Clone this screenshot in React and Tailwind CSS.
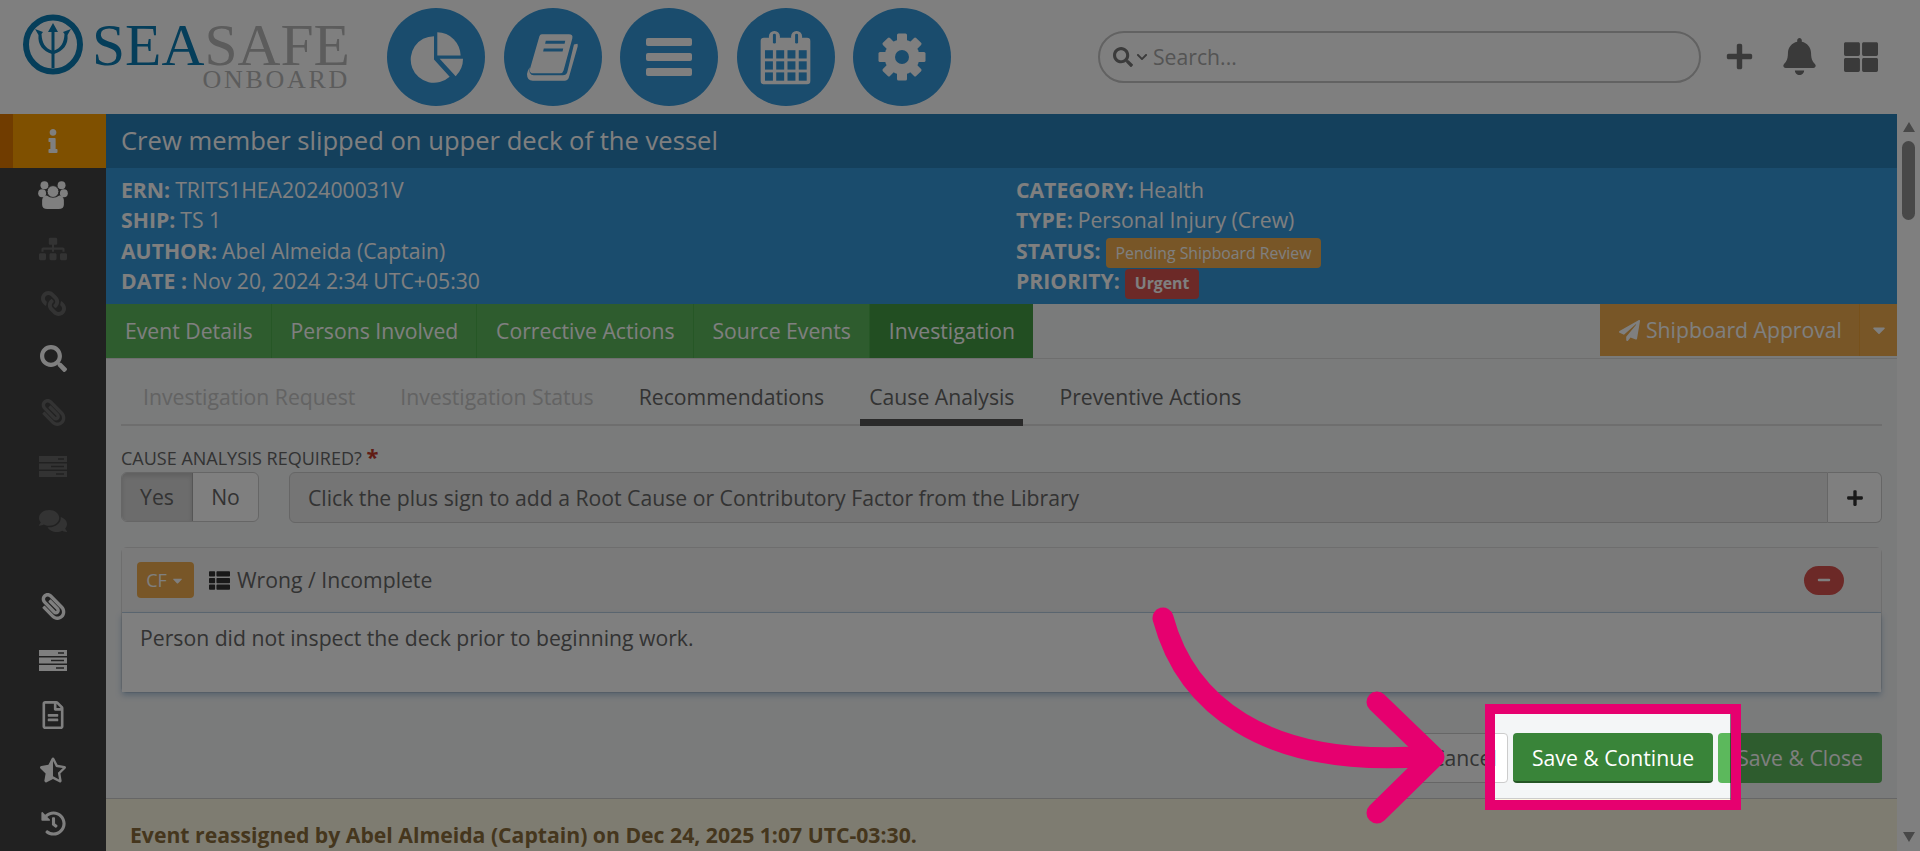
import { FaInfo, FaSitemap, FaLink, FaSearch, FaPaperclip, FaComments, FaRegFileAlt, FaStarHalfAlt, FaHistory, FaPlus, FaBell, FaThLarge, FaPaperPlane, FaCaretDown, FaThList, FaMinus, FaChevronDown } from "react-icons/fa";

const font = "font-['Open_Sans',sans-serif]";

function UsersIcon({ className }) {
  return (
    <svg viewBox="0 0 90 85" className={className}>
      <circle cx="19" cy="13" r="12" fill="currentColor" />
      <circle cx="71" cy="13" r="12" fill="currentColor" />
      <circle cx="12" cy="37" r="12" fill="currentColor" />
      <circle cx="78" cy="37" r="12" fill="currentColor" />
      <circle cx="45" cy="32" r="18" fill="currentColor" stroke="#424242" strokeWidth="3" />
      <path d="M12 58 Q14 44 26 44 Q45 58 64 44 Q76 44 78 58 V72 Q78 85 62 85 H28 Q12 85 12 72 Z" fill="currentColor" />
    </svg>
  );
}

function ServerIcon({ className }) {
  return (
    <svg viewBox="0 0 28 21" className={className}>
      <path fillRule="evenodd" fill="currentColor" d="M0 0H28V6H0Z M19 2.2H25V3.8H19Z M0 7.5H28V13.5H0Z M12 9.7H25V11.3H12Z M0 15H28V21H0Z M17 17.2H25V18.8H17Z" />
    </svg>
  );
}

const sideTop = [
  { icon: UsersIcon, on: true, size: "w-[30px] h-[28px]" },
  { icon: FaSitemap, size: "text-[28px]" },
  { icon: FaLink, size: "text-[25px] -scale-x-100" },
  { icon: FaSearch, on: true, size: "text-[27px]" },
  { icon: FaPaperclip, size: "text-[27px] -scale-x-100" },
  { icon: ServerIcon, size: "w-[28px] h-[21px]" },
  { icon: FaComments, size: "text-[28px]" },
];
const sideBottom = [
  { icon: FaPaperclip, size: "text-[27px] -scale-x-100" },
  { icon: ServerIcon, size: "w-[28px] h-[21px]" },
  { icon: FaRegFileAlt, size: "text-[28px]" },
  { icon: FaStarHalfAlt, size: "text-[26px]" },
  { icon: FaHistory, size: "text-[25px]" },
];

function PieIcon() {
  return (
    <svg viewBox="70 75 165 158" className="w-[55px] h-[53px]" fill="#fff">
      <path d="M145 90 V160 L192 212 A70 70 0 1 1 145 90 Z" />
      <path d="M155 78 A72 72 0 0 1 225 148 H155 Z" />
      <path d="M162 158 H232 A72 72 0 0 1 210 210 Z" />
    </svg>
  );
}

function BookIcon() {
  return (
    <svg viewBox="425 88 158 146" className="w-[53px] h-[49px]">
      <path d="M472 92 H553 Q566 92 563 104 L537 200 Q535 208 527 208 H447 Q436 208 436 198 L465 98 Q467 92 472 92 Z" fill="#fff" />
      <path d="M568 122 L578 120 Q580 122 579 128 L553 220 Q550 230 540 230 H445 Q428 230 428 210 Q430 200 436 190 Q432 214 448 214 H535 Q545 214 548 205 Z" fill="#fff" />
      <path d="M484 111 H542 L540 120 H482 Z M478 134 H536 L534 143 H476 Z" fill="#3498db" />
    </svg>
  );
}

function BarsIcon() {
  return (
    <div className="flex flex-col gap-[7px]">
      <div className="w-[46px] h-[8px] rounded-[2px] bg-white" />
      <div className="w-[46px] h-[8px] rounded-[2px] bg-white" />
      <div className="w-[46px] h-[8px] rounded-[2px] bg-white" />
    </div>
  );
}

function CalendarIcon() {
  const cells = [];
  for (let r = 0; r < 3; r++) {
    for (let c = 0; c < 4; c++) {
      cells.push(<rect key={r + "-" + c} x={103 + c * 34} y={138 + r * 33.5} width={24} height={25} fill="#3498db" />);
    }
  }
  return (
    <svg viewBox="88 78 154 164" className="w-[51px] h-[55px]">
      <rect x="90" y="100" width="150" height="141" rx="10" fill="#fff" />
      <rect x="115" y="80" width="33" height="45" rx="16" fill="#fff" />
      <rect x="182" y="80" width="33" height="45" rx="16" fill="#fff" />
      <rect x="127" y="88" width="9" height="30" rx="4" fill="#3498db" />
      <rect x="194" y="88" width="9" height="30" rx="4" fill="#3498db" />
      {cells}
    </svg>
  );
}

function GearIcon() {
  const teeth = [0, 45, 90, 135, 180, 225, 270, 315];
  return (
    <svg viewBox="0 0 48 48" className="w-[48px] h-[48px]" fill="#fff">
      <circle cx="24" cy="24" r="17.5" />
      {teeth.map((a) => (
        <rect key={a} x="19" y="0.5" width="10" height="9" rx="1.5" transform={"rotate(" + a + " 24 24)"} />
      ))}
      <circle cx="24" cy="24" r="7" fill="#3498db" />
    </svg>
  );
}

function NavCircle({ children }) {
  return (
    <div className="w-[98px] h-[98px] shrink-0 rounded-full bg-[#3498db] flex items-center justify-center">
      {children}
    </div>
  );
}

function Logo() {
  return (
    <div className="w-[387px] shrink-0 flex pl-[23px] pt-[14px] items-start">
      <svg viewBox="0 0 60 61" className="w-[60px] h-[61px] shrink-0">
        <circle cx="30" cy="30.5" r="27" fill="none" stroke="#0b7cb5" strokeWidth="6" />
        <path d="M30 9 L35 18 H31.5 V54 H28.5 V18 H25 Z" fill="#0b7cb5" />
        <path d="M12 15 L20 18 L18.5 20 C19 29 22 34 29 36.5 V40 C20 37 14.5 31 15.5 21 Z" fill="#0b7cb5" />
        <path d="M48 15 L40 18 L41.5 20 C41 29 38 34 31 36.5 V40 C40 37 45.5 31 44.5 21 Z" fill="#0b7cb5" />
      </svg>
      <div className="ml-[9px] w-[256px] font-['Liberation_Serif',serif]">
        <div className="text-[59.5px] leading-[50px] mt-[6px] whitespace-nowrap text-[#b8b8b8]">
          <span className="text-[#0b7cb5]">SEA</span>SAFE
        </div>
        <div className="text-[26px] leading-[26px] mt-[-3px] tracking-[2.7px] text-right mr-[-2px] text-[#b8b8b8]">ONBOARD</div>
      </div>
    </div>
  );
}

function Header() {
  return (
    <div className="h-[114px] bg-white flex items-start">
      <Logo />
      <div className="flex gap-[18.5px] pt-[8px]">
        <NavCircle><PieIcon /></NavCircle>
        <NavCircle><BookIcon /></NavCircle>
        <NavCircle><BarsIcon /></NavCircle>
        <NavCircle><CalendarIcon /></NavCircle>
        <NavCircle><GearIcon /></NavCircle>
      </div>
      <div className="ml-[147px] mt-[31px] w-[603px] h-[52px] rounded-full border-2 border-[#c4c4c4] flex items-center pl-[13px] text-[21.2px] text-[#a8a8a8]">
        <FaSearch className="text-[#777] text-[20px]" />
        <FaChevronDown className="text-[#777] text-[12px] ml-[3px]" />
        <span className="ml-[5px]">Search...</span>
      </div>
      <div className="flex items-center mt-[38px] h-[37px] ml-[24px] text-[#757575]">
        <FaPlus className="text-[29px]" />
        <FaBell className="text-[37px] ml-[27px]" />
        <FaThLarge className="text-[34px] ml-[26px]" />
      </div>
    </div>
  );
}

function Sidebar() {
  return (
    <div className="w-[106px] shrink-0 bg-[#424242] flex flex-col">
      <div className="h-[54px] bg-[#ffa000] border-l-[13px] border-[#e07800] flex items-center justify-center pr-[13px]">
        <FaInfo className="text-white text-[24px]" />
      </div>
      {sideTop.map((s, i) => {
        const Icon = s.icon;
        return (
          <div key={i} className="h-[54.5px] flex items-center justify-center">
            <Icon className={s.size + " " + (s.on ? "text-white" : "text-[#666]")} />
          </div>
        );
      })}
      <div className="h-[31px]" />
      {sideBottom.map((s, i) => {
        const Icon = s.icon;
        return (
          <div key={i} className="h-[54.5px] flex items-center justify-center">
            <Icon className={s.size + " text-white"} />
          </div>
        );
      })}
    </div>
  );
}

function InfoLine({ label, children }) {
  return (
    <div className="h-[30.2px] flex items-center whitespace-nowrap">
      <b className="font-bold mr-[5px]">{label}</b>
      {children}
    </div>
  );
}

function MainTabs() {
  const tabs = ["Event Details", "Persons Involved", "Corrective Actions", "Source Events"];
  return (
    <div className="flex h-[55px] border-b border-[#ddd]">
      {tabs.map((t) => (
        <div key={t} className="h-[54px] pl-[19px] pr-[17.8px] bg-[#5cb85c] border-r border-[#4cae4c] text-white flex items-center">{t}</div>
      ))}
      <div className="h-[54px] pl-[19px] pr-[17.8px] bg-[#449d44] text-white flex items-center">Investigation</div>
      <div className="ml-auto h-[52px] w-[297px] bg-[#f0ad4e] text-white flex items-center">
        <FaPaperPlane className="ml-[19px] text-[21px]" />
        <span className="ml-[6px]">Shipboard Approval</span>
        <div className="ml-auto w-[38px] h-full border-l border-[#eea236] flex items-center justify-center">
          <FaCaretDown className="text-[20px]" />
        </div>
      </div>
    </div>
  );
}

function SubTabs() {
  const item = "px-[9px] flex items-center pt-[16px] border-b-[7px] mb-[-2px] ";
  return (
    <div className="flex h-[67px] border-b-2 border-[#ddd] pl-[13px] gap-[27px] items-stretch">
      <div className={item + "border-transparent text-[#c6c6c6]"}>Investigation Request</div>
      <div className={item + "border-transparent text-[#c6c6c6]"}>Investigation Status</div>
      <div className={item + "border-transparent"}>Recommendations</div>
      <div className={item + "border-[#555]"}>Cause Analysis</div>
      <div className={item + "border-transparent"}>Preventive Actions</div>
    </div>
  );
}

function CausePanel() {
  return (
    <div className="mt-[24px] rounded-[6px] border border-[#ddd]">
      <div className="h-[65px] bg-[#f5f5f5] flex items-center pl-[15px] pr-[37px] border-b border-[#bcd0e2]">
        <div className="w-[57px] h-[36px] rounded-[4px] bg-[#f0ad4e] text-white text-[18px] flex items-center justify-center gap-[3px]">
          CF<FaCaretDown className="text-[15px]" />
        </div>
        <FaThList className="ml-[15px] text-[#333] text-[21px]" />
        <span className="ml-[7px]">Wrong / Incomplete</span>
        <div className="ml-auto w-[40px] h-[29px] rounded-full bg-[#d9534f] text-white flex items-center justify-center">
          <FaMinus className="text-[14px]" />
        </div>
      </div>
      <div className="h-[79px] bg-white px-[18px] pt-[11px] leading-[27px] shadow-[0_3px_6px_rgba(80,130,180,0.45)]">
        Person did not inspect the deck prior to beginning work.
      </div>
    </div>
  );
}

function Content() {
  return (
    <div className="w-[1791px] shrink-0 bg-[#f4f6f7] text-[21.2px] text-[#666] flex flex-col">
      <div className="h-[54px] bg-[#2980b9] text-white text-[25.6px] flex items-center pl-[15px]">
        Crew member slipped on upper deck of the vessel
      </div>
      <div className="h-[136px] bg-[#3498db] text-white pl-[15px] pt-[7px] flex">
        <div className="w-[895px]">
          <InfoLine label="ERN:">TRITS1HEA202400031V</InfoLine>
          <InfoLine label="SHIP:">TS 1</InfoLine>
          <InfoLine label="AUTHOR:">Abel Almeida (Captain)</InfoLine>
          <InfoLine label="DATE :">Nov 20, 2024 2:34 UTC+05:30</InfoLine>
        </div>
        <div>
          <InfoLine label="CATEGORY:">Health</InfoLine>
          <InfoLine label="TYPE:">Personal Injury (Crew)</InfoLine>
          <InfoLine label="STATUS:">
            <span className="h-[30px] px-[10px] mt-[6px] rounded-[4px] bg-[#f0ad4e] text-[15.8px] flex items-center">Pending Shipboard Review</span>
          </InfoLine>
          <InfoLine label="PRIORITY:">
            <span className="h-[30px] px-[10px] mt-[6px] rounded-[4px] bg-[#d9534f] text-[15.8px] font-bold flex items-center">Urgent</span>
          </InfoLine>
        </div>
      </div>
      <MainTabs />
      <div className="px-[15px]">
        <SubTabs />
        <div className="text-[18px] leading-[24px] mt-[19px] h-[27px] whitespace-nowrap">
          CAUSE ANALYSIS REQUIRED? <span className="text-[#c0392b] text-[22px] font-bold leading-none">*</span>
        </div>
        <div className="flex">
          <div className="w-[138px] h-[50px] flex rounded-[6px] border border-[#ccc] bg-white overflow-hidden">
            <div className="w-[71px] bg-[#d9d9d9] border-r border-[#adadad] shadow-[inset_0_3px_5px_rgba(0,0,0,0.125)] flex items-center justify-center">Yes</div>
            <div className="flex-1 flex items-center justify-center">No</div>
          </div>
          <div className="ml-[30px] flex-1 h-[51px] flex">
            <div className="flex-1 bg-[#eaeaea] rounded-l-[6px] border border-[#ccc] flex items-center pl-[18px]">
              Click the plus sign to add a Root Cause or Contributory Factor from the Library
            </div>
            <div className="w-[54px] bg-white border border-l-0 border-[#ccc] rounded-r-[6px] flex items-center justify-center text-[#333]">
              <FaPlus className="text-[18px]" />
            </div>
          </div>
        </div>
        <CausePanel />
        <div className="flex justify-end gap-[5px] mt-[40px] h-[50px]">
          <div className="w-[88px] h-[50px] bg-white border border-[#ccc] rounded-[4px] flex items-center justify-center">Cancel</div>
          <div className="w-[200px] h-[50px] pt-[2px] bg-[#398439] border-b-2 border-[#255625] rounded-[4px] text-white flex items-center justify-center">Save &amp; Continue</div>
          <div className="w-[164px] h-[50px] bg-[#5cb85c] rounded-[4px] text-white flex items-center justify-center">Save &amp; Close</div>
        </div>
      </div>
      <div className="mt-[15px] h-[53px] border-t border-[#ccc] bg-[#fcf8e3] text-[#8a6d3b] font-bold pl-[24px] pt-[22px] leading-[27px] whitespace-nowrap overflow-hidden">
        Event reassigned by Abel Almeida (Captain) on Dec 24, 2025 1:07 UTC-03:30.
      </div>
    </div>
  );
}

function Scrollbar() {
  return (
    <div className="flex-1 bg-white flex flex-col items-center pt-[8px]">
      <div className="w-0 h-0 border-x-[6px] border-x-transparent border-b-[10px] border-b-[#909090]" />
      <div className="mt-[9px] w-[13px] h-[79px] rounded-full bg-[#909090]" />
      <div className="mt-auto mb-[9px] w-0 h-0 border-x-[6px] border-x-transparent border-t-[10px] border-t-[#909090]" />
    </div>
  );
}

export default function App() {
  return (
    <div className={"relative w-[1920px] h-[851px] overflow-hidden bg-white " + font}>
      <Header />
      <div className="flex h-[737px] overflow-hidden">
        <Sidebar />
        <Content />
        <Scrollbar />
      </div>
      {/* dim layer with a hole, plus the pink highlight and arrow on top */}
      <div className="absolute left-[1495px] top-[714px] w-[235px] h-[86px] shadow-[0_0_0_3000px_rgba(0,0,0,0.5)]" />
      <div className="absolute left-[1485px] top-[704px] w-[256px] h-[106px] border-[10px] border-[#e6006f]" />
      <svg className="absolute inset-0 w-[1920px] h-[851px] pointer-events-none" viewBox="0 0 1920 851" fill="none" stroke="#e6006f" strokeWidth="21" strokeLinecap="round" strokeLinejoin="round">
        <path d="M1163 618 C1185 700 1260 770 1430 756" />
        <path d="M1377 702 L1434 757 M1434 757 L1377 813" />
      </svg>
    </div>
  );
}
